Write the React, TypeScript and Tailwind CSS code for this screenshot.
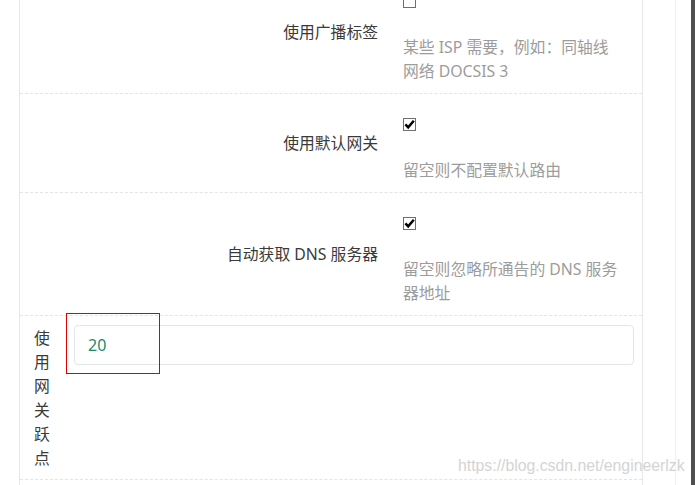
type RowProps = {
  label: string;
  checked: boolean;
  desc: string;
};

function Check({ checked }: { checked: boolean }) {
  return (
    <div className="flex h-[13px] w-[13px] items-center justify-center border border-[#6f6f6f] bg-white">
      {checked && (
        <svg width="11" height="11" viewBox="0 0 11 11">
          <path d="M1.4 5.4 L4.2 8.4 L9.8 1.8" fill="none" stroke="#000" strokeWidth="2.5" />
        </svg>
      )}
    </div>
  );
}

function CheckRow({ label, checked, desc }: RowProps) {
  return (
    <div className="flex items-center border-b border-dashed border-[#dfe5e8]">
      <div className="w-[358px] shrink-0 text-right leading-[24px] text-[#3a3a3a]">{label}</div>
      <div className="ml-[25px] w-[218px] shrink-0 pt-[24px] pb-[10px]">
        <Check checked={checked} />
        <div className="mt-[27px] leading-[24px] text-[#9c9c9c]">{desc}</div>
      </div>
    </div>
  );
}

export default function App() {
  return (
    <div className="relative h-[485px] w-[695px] overflow-hidden bg-white font-['Noto_Sans','Noto_Sans_CJK_SC',sans-serif] text-[15.8px]">
      <div className="flex h-full">
        <div className="w-[19px] shrink-0" />

        <div className="w-[624px] shrink-0 border-x border-[#e3e8ec]">
          <div className="-mt-[29px]">
            <CheckRow
              label="使用广播标签"
              checked={false}
              desc="某些 ISP 需要，例如：同轴线网络 DOCSIS 3"
            />
            <CheckRow label="使用默认网关" checked={true} desc="留空则不配置默认路由" />
            <CheckRow
              label="自动获取 DNS 服务器"
              checked={true}
              desc="留空则忽略所通告的 DNS 服务器地址"
            />

            <div className="flex items-start border-b border-dashed border-[#dfe5e8] pt-[10px] pb-[9px]">
              <div className="ml-[14px] w-[16px] shrink-0 leading-[24px] text-[#3a3a3a]">
                使用网关跃点
              </div>
              <div className="-mt-[1px] ml-[24px] flex h-[40px] w-[560px] shrink-0 items-center rounded-[4px] border border-[#e2e6e8] pl-[13px] text-[16px] text-[#178a6f]">
                20
              </div>
            </div>
          </div>
        </div>

        <div className="w-[32px] shrink-0" />
        <div className="w-px shrink-0 bg-[#f0f0f0]" />
        <div className="w-[15px] shrink-0" />
        <div className="w-[4px] shrink-0 bg-[#4f4f4f]" />
      </div>

      <div className="absolute left-[66px] top-[313px] h-[61px] w-[94px] border border-[#e00000]" />

      <div className="absolute left-[458px] top-[458px] font-['Liberation_Sans',sans-serif] text-[15.8px] leading-[16px] whitespace-nowrap text-[#d4d4d4]">
        https://blog.csdn.net/engineerlzk
      </div>
    </div>
  );
}
